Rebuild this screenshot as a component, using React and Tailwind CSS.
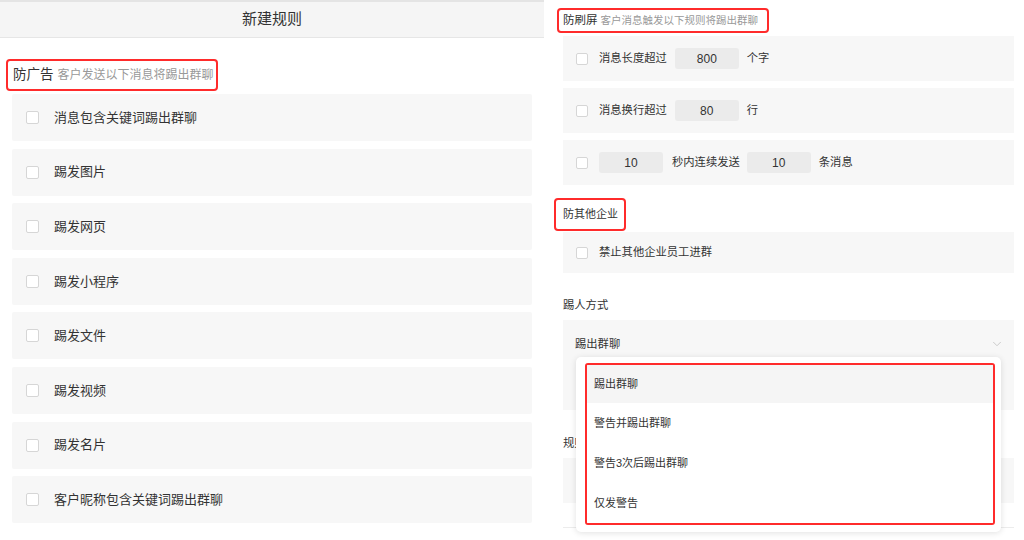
import React from 'react';
import { ChevronDown } from 'lucide-react';

const font = { fontFamily: '"Liberation Sans", "Noto Sans CJK SC", sans-serif' };

const adRules = [
  '消息包含关键词踢出群聊',
  '踢发图片',
  '踢发网页',
  '踢发小程序',
  '踢发文件',
  '踢发视频',
  '踢发名片',
  '客户昵称包含关键词踢出群聊',
];

const kickOptions = ['踢出群聊', '警告并踢出群聊', '警告3次后踢出群聊', '仅发警告'];

const Box = ({ size = 'w-[13px] h-[13px]' }) => (
  <span className={`${size} shrink-0 rounded-[2px] border border-[#d6d6d6] bg-white`} />
);

const NumInput = ({ value }) => (
  <span className="flex h-[21px] w-[64px] items-center justify-center rounded-[3px] bg-[#ebebeb] text-[12px] text-[#333]">
    {value}
  </span>
);

const LeftPanel = () => (
  <div className="flex w-[544px] shrink-0 flex-col">
    {/* Header */}
    <div className="flex h-[38px] items-center justify-center border-t-2 border-b border-t-[#e4e4e4] border-b-[#e6e6e6] bg-[#f5f5f5]">
      <span className="text-[15px] text-[#333]">新建规则</span>
    </div>

    <div className="ml-[6px] mt-[21px] flex h-[32px] w-[212px] items-center rounded-[4px] border-2 border-[#ff2b2b] pl-[5px]">
      <span className="text-[13.5px] text-[#333]">防广告</span>
      <span className="ml-[4px] text-[12px] text-[#999]">客户发送以下消息将踢出群聊</span>
    </div>

    <div className="ml-[12px] mt-[3px] flex w-[520px] flex-col gap-[7.6px]">
      {adRules.map((rule) => (
        <div key={rule} className="flex h-[47px] items-center rounded-[2px] bg-[#f7f7f7] pl-[14px]">
          <Box />
          <span className="ml-[15px] text-[13px] text-[#333]">{rule}</span>
        </div>
      ))}
    </div>
  </div>
);

const RightPanel = () => (
  <div className="flex flex-1 flex-col pl-[19px] pr-[10px] pt-[8px]">
    {/* 防刷屏 */}
    <div className="-ml-[6px] flex h-[25px] w-[212px] items-center rounded-[4px] border-2 border-[#ff2b2b] pl-[4px]">
      <span className="text-[11.5px] text-[#333]">防刷屏</span>
      <span className="ml-[3px] text-[10.5px] text-[#999]">客户消息触发以下规则将踢出群聊</span>
    </div>

    <div className="mt-[3px] flex flex-col gap-[7px] text-[11.3px] text-[#333]">
      <div className="flex h-[45px] items-center bg-[#f7f7f7] pl-[13px]">
        <Box size="w-[12px] h-[12px]" />
        <span className="ml-[11px]">消息长度超过</span>
        <span className="ml-[8px]"><NumInput value="800" /></span>
        <span className="ml-[8px]">个字</span>
      </div>
      <div className="flex h-[45px] items-center bg-[#f7f7f7] pl-[13px]">
        <Box size="w-[12px] h-[12px]" />
        <span className="ml-[11px]">消息换行超过</span>
        <span className="ml-[8px]"><NumInput value="80" /></span>
        <span className="ml-[8px]">行</span>
      </div>
      <div className="flex h-[45px] items-center bg-[#f7f7f7] pl-[13px]">
        <Box size="w-[12px] h-[12px]" />
        <span className="ml-[11px]"><NumInput value="10" /></span>
        <span className="ml-[9px]">秒内连续发送</span>
        <span className="ml-[7px]"><NumInput value="10" /></span>
        <span className="ml-[8px]">条消息</span>
      </div>
    </div>

    {/* 防其他企业 */}
    <div className="-ml-[9px] mt-[13px] flex h-[33px] w-[72px] items-center rounded-[4px] border-2 border-[#ff2b2b] pl-[7px]">
      <span className="whitespace-nowrap text-[11px] text-[#333]">防其他企业</span>
    </div>
    <div className="mt-[1px] flex h-[41px] items-center bg-[#f7f7f7] pl-[13px] text-[11.3px] text-[#333]">
      <Box size="w-[12px] h-[12px]" />
      <span className="ml-[11px]">禁止其他企业员工进群</span>
    </div>

    {/* 踢人方式 */}
    <div className="mt-[22px] flex h-[20px] items-center text-[11.3px] text-[#333]">踢人方式</div>
    <div className="relative mt-[5px] h-[90px] bg-[#f7f7f7]">
      <div className="flex h-[48px] items-center justify-between pl-[12px] pr-[10px] text-[11.3px] text-[#333]">
        <span>踢出群聊</span>
        <ChevronDown size={14} strokeWidth={1.5} className="text-[#c4c4c4]" />
      </div>

      {/* Dropdown */}
      <div className="absolute left-[13px] right-[13px] top-[37px] z-10 rounded-[5px] bg-white pb-[7px] pl-[9px] pr-[6px] pt-[6px] shadow-[0_1px_6px_rgba(0,0,0,0.12)]">
        <div className="flex flex-col overflow-hidden rounded-[3px] border-2 border-[#ff2b2b]">
          {kickOptions.map((opt, i) => (
            <div
              key={opt}
              className={`flex items-center pl-[7px] text-[11px] text-[#333] ${i === 0 ? 'h-[38px] bg-[#f5f5f5]' : 'h-[40px] bg-white'}`}
            >
              {opt}
            </div>
          ))}
        </div>
      </div>
    </div>

    <div className="mt-[23px] flex h-[20px] items-center text-[11.3px] text-[#333]">规则名称</div>
    <div className="mt-[5px] h-[45px] bg-[#f7f7f7]" />
    <div className="mt-[24px] h-px bg-[#ececec]" />
  </div>
);

export default function App() {
  return (
    <div className="flex h-[540px] w-[1024px] overflow-hidden bg-white" style={font}>
      <LeftPanel />
      <RightPanel />
    </div>
  );
}
